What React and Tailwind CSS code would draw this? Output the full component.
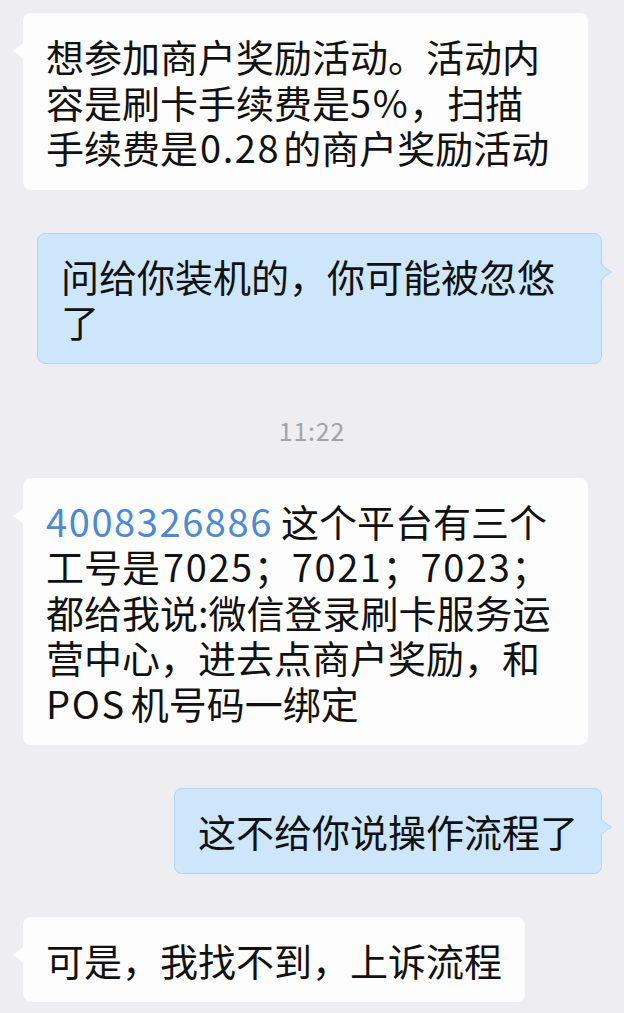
import React from 'react';

// latin runs in the reference are a bit wider and spaced off the CJK text
const L = ({ children, gap = '', blue = false }) => (
  <span className={`tracking-[1.6px] ${gap} ${blue ? 'text-[#4a8ad6]' : ''}`}>{children}</span>
);

const messages = [
  {
    side: 'left',
    wide: true,
    mt: 'mt-0',
    lines: [
      '想参加商户奖励活动。活动内',
      ['容是刷卡手续费是', <L key="p">5%</L>, '，扫描'],
      ['手续费是', <L key="d" gap="ml-[2px] mr-[3px]">0.28</L>, '的商户奖励活动'],
    ],
  },
  {
    side: 'right',
    wide: true,
    mt: 'mt-[43px]',
    lines: ['问给你装机的，你可能被忽悠', '了'],
  },
  { time: '11:22' },
  {
    side: 'left',
    wide: true,
    mt: 'mt-[33px]',
    lines: [
      [<L key="n" blue gap="mr-[8px]">4008326886</L>, '这个平台有三个'],
      ['工号是', <L key="a" gap="ml-[3px]">7025</L>, '；', <L key="b">7021</L>, '；', <L key="c">7023</L>, '；'],
      '都给我说:微信登录刷卡服务运',
      '营中心，进去点商户奖励，和',
      [<L key="p" gap="mr-[5px]">POS</L>, '机号码一绑定'],
    ],
  },
  { side: 'right', mt: 'mt-[43px]', lines: ['这不给你说操作流程了'] },
  { side: 'left', mt: 'mt-[43px]', lines: ['可是，我找不到，上诉流程'] },
];

const LeftTail = () => (
  <svg className="absolute left-[-11px] top-[28px]" width="12" height="20" viewBox="0 0 12 20">
    <path d="M12 0 C10 4 5 8 1.2 9.3 Q0 10 1.2 10.7 C5 12 10 16 12 20 Z" fill="#fdfdfd" />
  </svg>
);

const RightTail = () => (
  <svg className="absolute right-[-11px] top-[28px]" width="12" height="20" viewBox="0 0 12 20">
    <path d="M0 0 C2 4 7 8 10.8 9.3 Q12 10 10.8 10.7 C7 12 2 16 0 20 Z" fill="#cde6fb" />
    <path d="M0.5 0 C2.5 4 7 8 10.8 9.3 Q12 10 10.8 10.7 C7 12 2.5 16 0.5 20" fill="none" stroke="#b6d4ef" strokeWidth="1" />
  </svg>
);

const Bubble = ({ side, wide, lines, mt }) => {
  const isLeft = side === 'left';
  return (
    <div className={`flex ${mt} ${isLeft ? 'justify-start pl-[23px]' : 'justify-end pr-[22px]'}`}>
      <div
        className={`relative rounded-[8px] px-[23px] text-[38px] leading-[45.5px] text-[#111] ${
          wide ? 'w-[565px]' : ''
        } ${isLeft ? 'bg-[#fdfdfd] py-[20px]' : 'bg-[#cde6fb] border border-[#b6d4ef] py-[19px]'}`}
      >
        {isLeft ? <LeftTail /> : <RightTail />}
        {lines.map((line, i) => (
          <div key={i} className="whitespace-nowrap">{line}</div>
        ))}
      </div>
    </div>
  );
};

export default function App() {
  return (
    <div
      className="min-h-screen w-full bg-[#ededf2] pt-[13px] pb-[20px] flex flex-col"
      style={{ fontFamily: '"Noto Sans CJK SC", "Noto Sans", sans-serif' }}
    >
      {messages.map((m, i) =>
        m.time ? (
          <div key={i} className="mt-[51px] flex justify-center text-[25px] leading-[30px] tracking-[0.8px] text-[#a3a3a8]">
            {m.time}
          </div>
        ) : (
          <Bubble key={i} {...m} />
        )
      )}
    </div>
  );
}
